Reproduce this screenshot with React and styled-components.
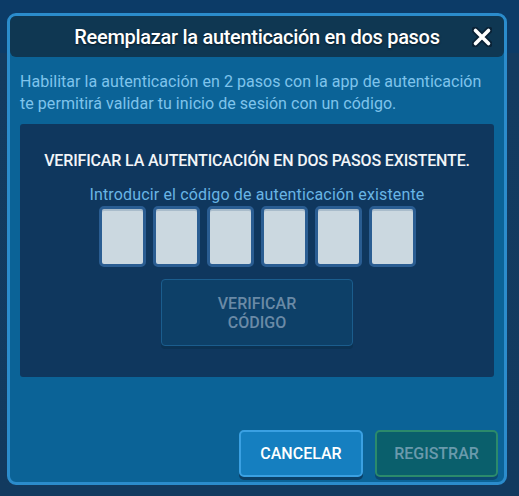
import React from "react";
import styled, { createGlobalStyle } from "styled-components";

const Global = createGlobalStyle`
  html, body { margin: 0; padding: 0; }
  body {
    width: 519px;
    height: 496px;
    overflow: hidden;
    background: linear-gradient(#0c3b67 0, #0c3b67 53px, #133b60 53px, #123a5f 100%);
    font-family: Roboto, "Noto Sans", sans-serif;
  }
`;

const Page = styled.div`
  padding: 13px 0 0 7px;
`;

const Modal = styled.div`
  box-sizing: border-box;
  width: 500px;
  height: 472px;
  border: 3px solid #2b8ccc;
  border-radius: 9px;
  background: #0b6397;
  display: flex;
  flex-direction: column;
`;

const Header = styled.div`
  height: 41px;
  background: #0f3752;
  border-radius: 6px;
  display: flex;
  align-items: center;
  justify-content: center;
  position: relative;
`;

const Title = styled.h1`
  margin: 0;
  font-size: 20px;
  font-weight: 500;
  color: #ffffff;
  letter-spacing: -0.3px;
  text-shadow: 0 1px 2px rgba(0, 0, 0, 0.6);
`;

const Close = styled.button`
  position: absolute;
  right: 12px;
  top: 11px;
  width: 20px;
  height: 20px;
  padding: 0;
  border: 0;
  background: none;
  cursor: pointer;
`;

const Body = styled.div`
  flex: 1;
  display: flex;
  flex-direction: column;
  padding: 0 10px;
`;

const Description = styled.p`
  margin: 14px 0 9px 0;
  font-size: 16px;
  line-height: 22px;
  letter-spacing: 0.05px;
  color: #7fc4ec;
`;

const Panel = styled.div`
  height: 253px;
  background: #0f375e;
  border-radius: 3px;
  display: flex;
  flex-direction: column;
  align-items: center;
`;

const Heading = styled.h2`
  margin: 26px 0 0 0;
  font-size: 16px;
  line-height: 22px;
  font-weight: 500;
  color: #f2f5f8;
  letter-spacing: -0.15px;
`;

const Label = styled.div`
  margin-top: 14px;
  font-size: 16px;
  line-height: 18px;
  letter-spacing: 0.15px;
  color: #69b5e5;
`;

const Codes = styled.div`
  display: flex;
  gap: 7px;
  margin-top: 2px;
`;

const CodeBox = styled.input`
  box-sizing: border-box;
  width: 47px;
  height: 61px;
  border: 3px solid #2a5d92;
  border-radius: 5px;
  background: #cbd8e0;
  box-shadow: inset 0 2px 0 #a9bccb;
  outline: none;
  padding: 0;
`;

const VerifyButton = styled.button`
  box-sizing: border-box;
  margin-top: 12px;
  width: 192px;
  height: 67px;
  border: 1px solid #1b5d8d;
  border-radius: 4px;
  background: #0d4068;
  box-shadow: 0 3px 0 #0b3253;
  color: #6a8aa6;
  font-family: inherit;
  font-size: 16px;
  font-weight: 500;
  line-height: 19px;
  padding: 0 30px;
`;

const Footer = styled.div`
  margin-top: auto;
  display: flex;
  justify-content: flex-end;
  gap: 12px;
  padding: 0 6px 5px 0;
`;

const FooterButton = styled.button`
  box-sizing: border-box;
  width: ${(p) => p.$w}px;
  height: 47px;
  border-radius: 5px;
  border: 2px solid ${(p) => (p.$primary ? "#3aa0e2" : "#2b8a6b")};
  background: ${(p) => (p.$primary ? "#157fc0" : "#0a5f6c")};
  color: ${(p) => (p.$primary ? "#ffffff" : "#6a9aac")};
  box-shadow: 0 3px 0 ${(p) => (p.$primary ? "#0b3f66" : "#0a4a72")};
  font-family: inherit;
  font-size: 16px;
  font-weight: 500;
  padding: 0;
`;

export default function App() {
  return (
    <Page>
      <Global />
      <Modal>
        <Header>
          <Title>Reemplazar la autenticación en dos pasos</Title>
          <Close aria-label="Cerrar">
            <svg width="20" height="20" viewBox="0 0 20 20">
              <path d="M3 3 L17 17 M17 3 L3 17" stroke="#0a2236" strokeWidth="7" strokeLinecap="round" />
              <path d="M3.5 3.5 L16.5 16.5 M16.5 3.5 L3.5 16.5" stroke="#ffffff" strokeWidth="3.6" strokeLinecap="round" />
            </svg>
          </Close>
        </Header>
        <Body>
          <Description>
            Habilitar la autenticación en 2 pasos con la app de autenticación te permitirá validar tu inicio de sesión con un código.
          </Description>
          <Panel>
            <Heading>VERIFICAR LA AUTENTICACIÓN EN DOS PASOS EXISTENTE.</Heading>
            <Label>Introducir el código de autenticación existente</Label>
            <Codes>
              {[0, 1, 2, 3, 4, 5].map((i) => (
                <CodeBox key={i} maxLength={1} />
              ))}
            </Codes>
            <VerifyButton disabled>VERIFICAR CÓDIGO</VerifyButton>
          </Panel>
        </Body>
        <Footer>
          <FooterButton $primary $w={124}>CANCELAR</FooterButton>
          <FooterButton $w={123} disabled>REGISTRAR</FooterButton>
        </Footer>
      </Modal>
    </Page>
  );
}
